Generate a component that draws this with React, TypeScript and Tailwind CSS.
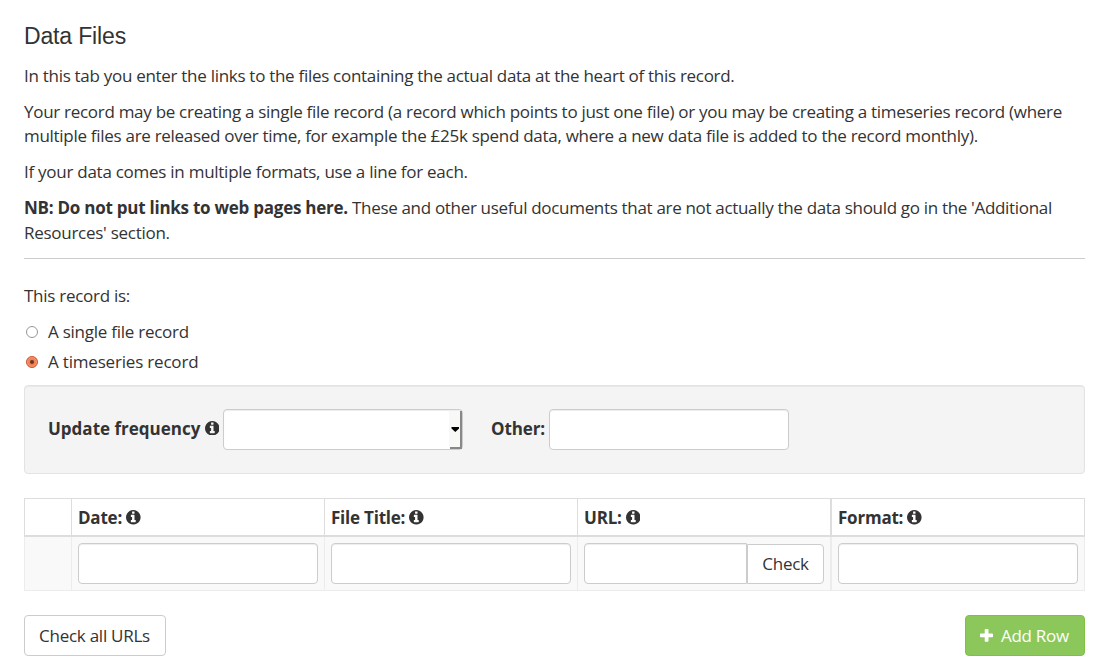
import type { ReactNode } from "react";

const Info = ({ className = "" }: { className?: string }) => (
  <svg className={`size-[14.6px] shrink-0 ${className}`} viewBox="128 128 1536 1536" fill="currentColor">
    <path d="M1152 1376v-160q0-14-9-23t-23-9h-96v-512q0-14-9-23t-23-9h-320q-14 0-23 9t-9 23v160q0 14 9 23t23 9h96v320h-96q-14 0-23 9t-9 23v160q0 14 9 23t23 9h448q14 0 23-9t9-23zm-128-896v-160q0-14-9-23t-23-9h-192q-14 0-23 9t-9 23v160q0 14 9 23t23 9h192q14 0 23-9t9-23zm640 416q0 209-103 385.500t-279.500 279.500-385.500 103-385.500-103-279.500-279.500-103-385.500 103-385.500 279.500-279.500 385.500-103 385.500 103 279.500 279.500 103 385.500z" />
  </svg>
);

const inputLook =
  "h-[41px] border border-[#ccc] bg-white outline-none shadow-[inset_0_1px_1px_rgba(0,0,0,0.075)]";

function Heading({ title, className = "" }: { title?: string; className?: string }) {
  return (
    <div
      className={`flex h-[39px] items-center gap-1 border-t border-b-2 border-l border-[#ddd] pt-0.5 pl-1.5 font-bold tracking-[-0.22px] ${className}`}
    >
      {title && (
        <>
          <span>{title}</span>
          <Info className="-mt-[1.4px]" />
        </>
      )}
    </div>
  );
}

function Cell({ children, className = "" }: { children?: ReactNode; className?: string }) {
  return (
    <div className={`flex h-[54px] border-b border-l border-[#ececec] bg-[#f9f9f9] pt-1.5 pl-1.5 ${className}`}>
      {children}
    </div>
  );
}

export default function App() {
  return (
    <main className="h-[668px] w-[1107px] overflow-hidden bg-white pr-[22px] pl-6 font-['Open_Sans',sans-serif] text-[17px] leading-[24.28px] tracking-[-0.29px] text-[#333]">
      <h1 className="pt-6 font-['Liberation_Sans',Arial,sans-serif] text-[23px] leading-[25px] tracking-[-0.15px]">
        Data Files
      </h1>
      <div className="mt-[14.7px] flex h-[182px] flex-col gap-[11.8px]">
        <p>In this tab you enter the links to the files containing the actual data at the heart of this record.</p>
        <p>
          Your record may be creating a single file record (a record which points to just one file) or you may be
          creating a timeseries record (where multiple files are released over time, for example the £25k spend data,
          where a new data file is added to the record monthly).
        </p>
        <p className="tracking-[-0.265px]">If your data comes in multiple formats, use a line for each.</p>
        <p className="-mt-[0.3px] leading-[24.9px] tracking-[-0.32px]">
          <strong className="tracking-[-0.25px]">NB: Do not put links to web pages here.</strong> These and other
          useful documents that are not actually the data should go in the 'Additional{" "}
          <span className="tracking-[-0.27px]">Resources' section.</span>
        </p>
      </div>
      <hr className="mt-[12.3px] border-[#ccc]" />
      <p className="mt-[25px] h-6 tracking-[-0.27px]">This record is:</p>
      <div className="mt-3 flex h-6 items-center">
        <svg className="ml-[2px] size-3" viewBox="0 0 12 12">
          <circle cx="6" cy="6" r="5.5" fill="#fff" stroke="#999790" />
        </svg>
        <span className="ml-2.5 tracking-[-0.25px]">A single file record</span>
      </div>
      <div className="mt-1.5 flex h-6 items-center">
        <svg className="ml-[2px] size-3" viewBox="0 0 12 12">
          <circle cx="6" cy="6" r="5.5" fill="#f08259" stroke="#c65832" />
          <circle cx="6" cy="6" r="4.4" fill="none" stroke="#f79a76" strokeWidth="0.7" />
          <circle cx="6" cy="6" r="2" fill="#6b3524" />
        </svg>
        <span className="ml-2.5 tracking-[-0.19px]">A timeseries record</span>
      </div>

      <section className="mt-[11px] flex h-[89px] items-start rounded-[4px] border border-[#e3e3e3] bg-[#f4f4f4] pt-[23px] pl-[23px] tracking-normal shadow-[inset_0_1px_1px_rgba(0,0,0,0.05)]">
        <label className="flex h-10 w-[175px] items-center gap-[4.5px] font-bold whitespace-nowrap">
          Update frequency
          <Info className="-mt-0.5" />
        </label>
        <div className={`${inputLook} flex w-[240px] justify-end rounded-[4px]`}>
          <svg className="h-[39px] w-[13px]" viewBox="0 0 13 39">
            <path d="M0 1h12v37H0z" fill="#f8f8f7" />
            <path d="M12 1v37H1" fill="none" stroke="#888" strokeWidth="2" />
            <path d="M2.5 17h7.5v1.5L6.3 22 2.5 18.500z" fill="#000" />
          </svg>
        </div>
        <label className="ml-7 flex h-10 w-[58px] items-center font-bold tracking-[-0.1px]">Other:</label>
        <input className={`${inputLook} w-[240px] rounded-[4px]`} />
      </section>

      <section className="mt-6 grid grid-cols-[47px_253px_253px_253px_255px]">
        <Heading />
        <Heading title="Date:" />
        <Heading title="File Title:" />
        <Heading title="URL:" />
        <Heading title="Format:" className="border-r border-l-2" />
        <Cell />
        <Cell>
          <input className={`${inputLook} w-[240px] rounded-[4px]`} />
        </Cell>
        <Cell>
          <input className={`${inputLook} w-[240px] rounded-[4px]`} />
        </Cell>
        <Cell>
          <input className={`${inputLook} w-[163px] rounded-l-[4px]`} />
          <button className="mt-px h-10 w-[77px] rounded-r-[4px] border border-[#ccc] bg-white">Check</button>
        </Cell>
        <Cell className="border-r border-l-2">
          <input className={`${inputLook} w-[240px] rounded-[4px]`} />
        </Cell>
      </section>

      <footer className="mt-6 flex justify-between">
        <button className="h-[41px] w-[142px] rounded-[4px] border border-[#ccc] bg-white pt-px pr-px tracking-[-0.25px]">
          Check all URLs
        </button>
        <button className="flex h-[41px] w-[120px] items-center rounded-[4px] border border-[#7fc242] bg-[#8cc75b] pt-px pl-[14px] text-white">
          <svg className="-mt-px size-[13px]" viewBox="0 0 13 13">
            <path
              d="M5.500 0h2.200q.8 0 .8.800V4.500h3.700q.8 0 .8.800v2.200q0 .8-.8.800H8.500V12q0 .8-.8.800H5.500q-.8 0-.8-.8V8.300H.8Q0 8.300 0 7.500V5.300q0-.8.800-.8h3.900V.8q0-.8.800-.8z"
              fill="currentColor"
            />
          </svg>
          <span className="ml-2">Add Row</span>
        </button>
      </footer>
    </main>
  );
}
